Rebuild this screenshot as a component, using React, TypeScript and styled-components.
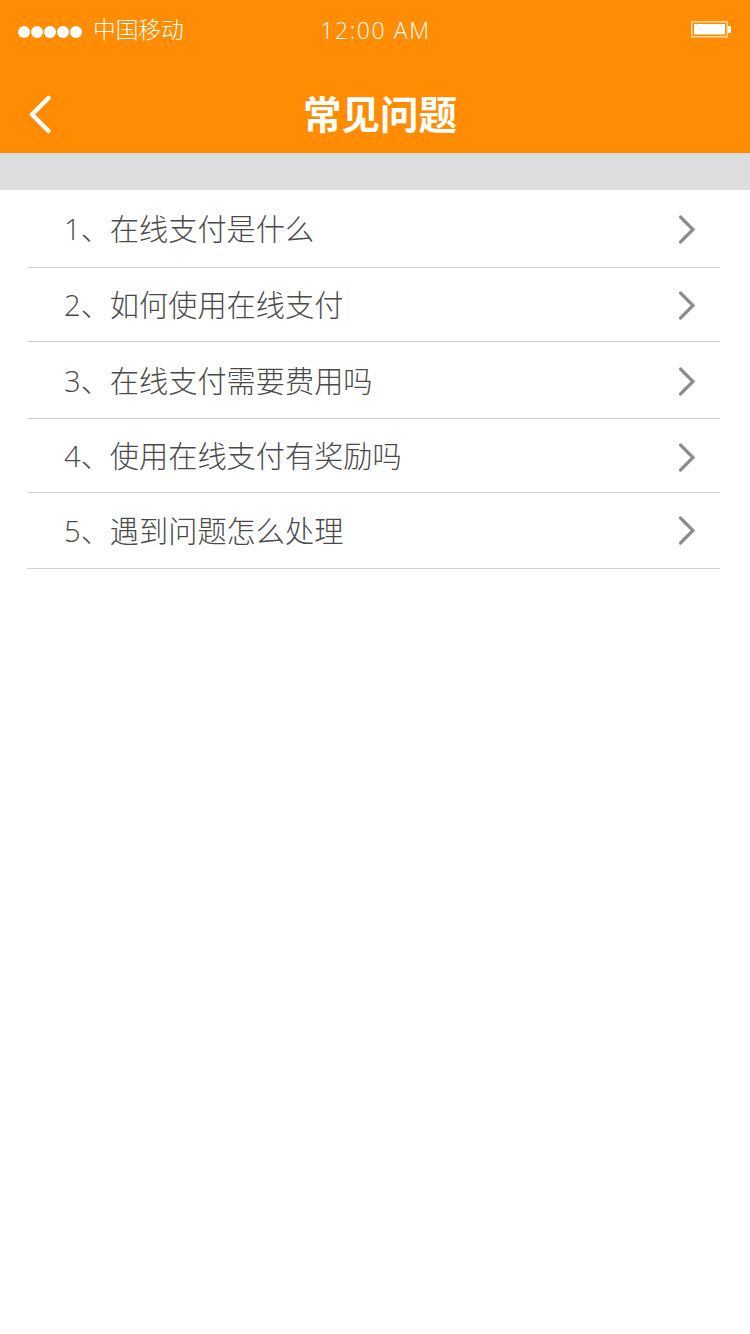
import styled, { createGlobalStyle } from 'styled-components';

const questions = [
	{ label: '1、在线支付是什么', height: 78, arrowShift: 1 },
	{ label: '2、如何使用在线支付', height: 74, arrowShift: 1 },
	{ label: '3、在线支付需要费用吗', height: 77, arrowShift: 1 },
	{ label: '4、使用在线支付有奖励吗', height: 74, arrowShift: 2 },
	{ label: '5、遇到问题怎么处理', height: 76, arrowShift: 0 }
];

const GlobalStyle = createGlobalStyle`
	html, body {
		margin: 0;
		padding: 0;
		background: #fff;
	}

	body {
		font-family: "Open Sans", "Noto Sans CJK SC", sans-serif;
	}
`;

const Page = styled.div`
	width: 750px;
	min-height: 1334px;
	background: #fff;
`;

const Header = styled.header`
	height: 153px;
	background: #ff8c02;
	color: #fff;
`;

const StatusBar = styled.div`
	display: grid;
	grid-template-columns: 1fr auto 1fr;
	align-items: center;
	height: 60px;
	padding: 0 19px 0 18px;
`;

const Carrier = styled.div`
	display: flex;
	align-items: center;
	gap: 11px;
	font-size: 22.7px;
	font-weight: 300;
	line-height: 60px;
`;

const Signal = styled.div`
	display: flex;
	gap: 1px;
	margin-top: 3px;
`;

const SignalDot = styled.span`
	width: 12px;
	height: 12px;
	border-radius: 50%;
	background: #fff;
`;

const Clock = styled.div`
	font-size: 23px;
	font-weight: 300;
	letter-spacing: 1.6px;
	line-height: 60px;
	margin-left: 2px;
`;

const Battery = styled.svg`
	justify-self: end;
	width: 40px;
	height: 18px;
	margin-top: -2px;
`;

const NavBar = styled.nav`
	position: relative;
	display: flex;
	align-items: center;
	justify-content: center;
	height: 93px;
	padding: 0 0 8px 10px;
	box-sizing: border-box;
`;

const BackButton = styled.svg`
	position: absolute;
	left: 28px;
	top: 34px;
	width: 24px;
	height: 40px;
`;

const Title = styled.h1`
	margin: 0;
	font-family: "Noto Sans CJK SC", sans-serif;
	font-size: 38.5px;
	font-weight: 700;
	line-height: 48px;
	position: relative;
	top: 9px;
`;

const Spacer = styled.div`
	height: 37px;
	background: #dddcdf;
`;

const List = styled.ul`
	list-style: none;
	margin: 0;
	padding: 0 30px 0 27px;
`;

const Row = styled.li<{ $height: number }>`
	display: flex;
	align-items: center;
	justify-content: space-between;
	box-sizing: border-box;
	height: ${(props) => props.$height}px;
	padding: 1px 23px 0 37px;
	border-bottom: 1px solid #d2d2d2;
`;

const Question = styled.span`
	font-size: 29.2px;
	font-weight: 300;
	color: #4a4a4a;
	line-height: 40px;
	white-space: nowrap;
`;

const Arrow = styled.svg<{ $shift: number }>`
	width: 20px;
	height: 32px;
	flex: none;
	position: relative;
	top: ${(props) => props.$shift}px;
`;

const App = () => {
	return (
		<Page>
			<GlobalStyle />
			<Header>
				<StatusBar>
					<Carrier>
						<Signal>
							{[0, 1, 2, 3, 4].map((i) => (
								<SignalDot key={i} />
							))}
						</Signal>
						<span>中国移动</span>
					</Carrier>
					<Clock>12:00 AM</Clock>
					<Battery viewBox="0 0 40 18">
						<rect x="0.75" y="1.75" width="35.5" height="15" fill="none" stroke="#ffd9a8" strokeWidth="1.5" />
						<rect x="3" y="4" width="31" height="10.5" fill="#fff" />
						<rect x="37" y="6" width="3" height="7" fill="#fff" />
					</Battery>
				</StatusBar>
				<NavBar>
					<BackButton viewBox="0 0 24 40">
						<path d="M20.5 4 L4 20.5 L20.5 37" fill="none" stroke="#fff" strokeWidth="4.5" strokeLinecap="round" strokeLinejoin="round" />
					</BackButton>
					<Title>常见问题</Title>
				</NavBar>
			</Header>
			<Spacer />
			<List>
				{questions.map((item) => (
					<Row key={item.label} $height={item.height}>
						<Question>{item.label}</Question>
						<Arrow $shift={item.arrowShift} viewBox="0 0 20 32">
							<path d="M3.5 3 L16 15.5 L3.5 28" fill="none" stroke="#8c8c8c" strokeWidth="3.2" strokeLinecap="round" strokeLinejoin="miter" />
						</Arrow>
					</Row>
				))}
			</List>
		</Page>
	);
};

export default App;
